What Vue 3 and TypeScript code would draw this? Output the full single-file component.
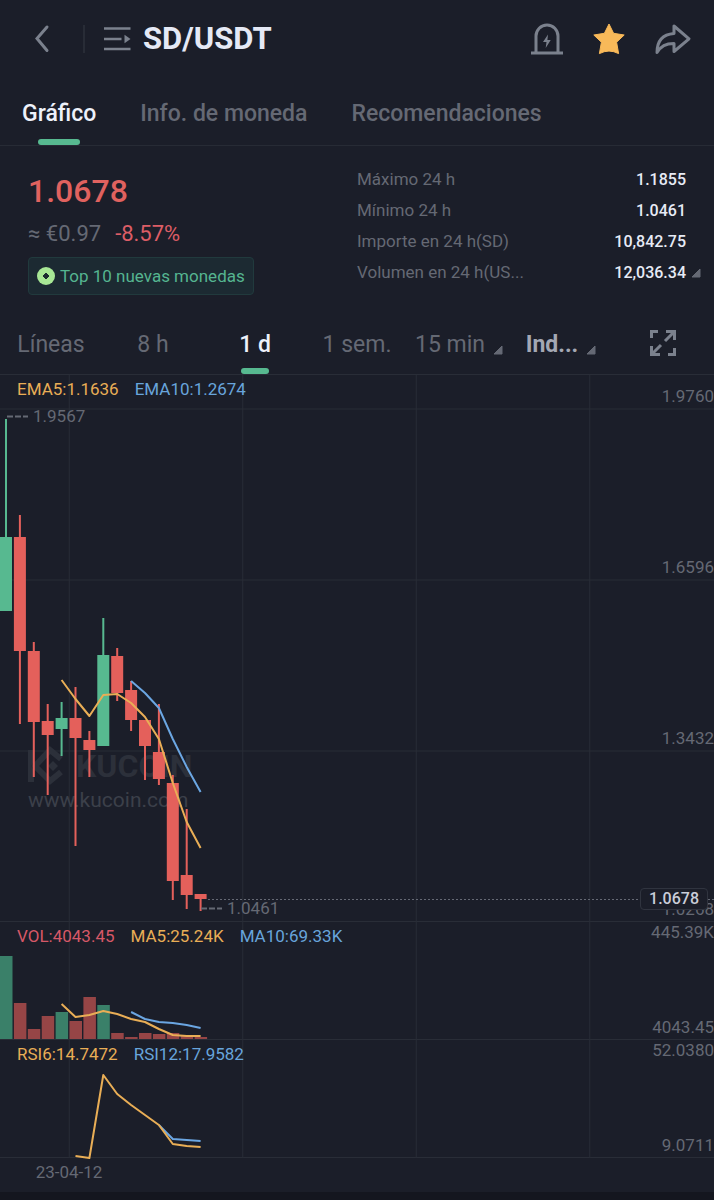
<script setup lang="ts">
import { ref } from 'vue'

type Point = [slot: number, y: number]
interface Candle {
  up: boolean
  open: number
  close: number
  high: number
  low: number
  volume: number
}

const STEP = 13.9
const slotX = (i: number): number => 6 + i * STEP
const line = (points: Point[]): string => points.map(([i, y]) => `${slotX(i)},${y}`).join(' ')

const tabs = ['Gráfico', 'Info. de moneda', 'Recomendaciones']
const activeTab = ref(tabs[0])

const frames = ['Líneas', '8 h', '1 d', '1 sem.']
const activeFrame = ref('1 d')

const stats = [
  { label: 'Máximo 24 h', value: '1.1855' },
  { label: 'Mínimo 24 h', value: '1.0461' },
  { label: 'Importe en 24 h(SD)', value: '10,842.75' },
  { label: 'Volumen en 24 h(US...', value: '12,036.34' },
]

const priceAxis = ['1.9760', '1.6596', '1.3432', '1.0268']
const gridX = ['9.7%', '34%', '58.3%', '82.6%']
const gridY = [34, 205, 376]

// Vertical values are offsets from the top of the price pane; volume is the bar height.
const candles: Candle[] = [
  { up: true, open: 162, close: 236, high: 44, low: 236, volume: 83 },
  { up: false, open: 162, close: 276, high: 140, low: 349, volume: 36 },
  { up: false, open: 276, close: 347, high: 267, low: 402, volume: 10 },
  { up: false, open: 346, close: 360, high: 329, low: 420, volume: 23 },
  { up: true, open: 343, close: 354, high: 327, low: 381, volume: 27 },
  { up: false, open: 343, close: 363, high: 312, low: 471, volume: 18 },
  { up: false, open: 365, close: 375, high: 356, low: 402, volume: 42 },
  { up: true, open: 280, close: 371, high: 243, low: 371, volume: 34 },
  { up: false, open: 281, close: 318, high: 273, low: 326, volume: 6 },
  { up: false, open: 315, close: 345, high: 306, low: 356, volume: 2 },
  { up: false, open: 345, close: 371, high: 345, low: 405, volume: 6 },
  { up: false, open: 377, close: 404, high: 329, low: 410, volume: 5 },
  { up: false, open: 408, close: 506, high: 400, low: 525, volume: 6 },
  { up: false, open: 500, close: 520, high: 434, low: 534, volume: 4 },
  { up: false, open: 519, close: 524, high: 519, low: 536, volume: 2 },
]

const ema5 = line([[4, 305], [5, 324], [6, 341], [7, 320], [8, 319], [9, 328], [10, 342], [11, 364], [12, 408], [13, 447], [14, 473]])
const ema10 = line([[9, 306], [10, 318], [11, 333], [12, 364], [13, 392], [14, 417]])
const volMa5 = line([[4, 82], [5, 95], [6, 93], [7, 89], [8, 92], [9, 97], [10, 100], [11, 107], [12, 113], [13, 114], [14, 114]])
const volMa10 = line([[9, 90], [10, 97], [11, 100], [12, 101], [13, 103], [14, 106]])
const rsi6 = line([[5, 116], [6, 118], [7, 35], [8, 54], [9, 65], [10, 75], [11, 85], [12, 104], [13, 106], [14, 107]])
const rsi12 = line([[11, 85], [12, 99], [13, 100], [14, 101]])
</script>

<template>
  <main class="screen">
    <header class="topbar">
      <button class="icon-btn" type="button" aria-label="Volver">
        <svg width="16" height="30" viewBox="0 0 16 30"><path class="stroke" d="M13 3 3 14.500 13 26.500" stroke-linecap="round" /></svg>
      </button>
      <span class="divider"></span>
      <button class="icon-btn" type="button" aria-label="Lista de pares">
        <svg width="27" height="26" viewBox="0 0 27 26">
          <path class="stroke thin" d="M0 2.500h26.500M0 13h17.500M0 23h26.500" />
          <path class="fill" d="M20.500 8.800 26.500 13l-6 4.200z" />
        </svg>
      </button>
      <h1>SD/USDT</h1>
      <nav class="actions">
        <button class="icon-btn" type="button" aria-label="Alerta de precio">
          <svg width="32" height="32" viewBox="0 0 32 32">
            <path class="stroke" d="M5 29V13a11 11 0 0 1 22 0v16M0 30h32" />
            <path class="fill" d="m17 11.500-5 7.500h3.500l-.8 6 5-8h-3.300z" />
          </svg>
        </button>
        <button class="icon-btn" type="button" aria-label="Favorito">
          <svg width="32" height="32" viewBox="0 0 32 32">
            <path class="star" d="m16 1 4.600 9.300 10.600 1.700-7.600 7.200 2 11.400Q16 25.500 6.400 30.600l2-11.400L.8 12l10.600-1.700z" />
          </svg>
        </button>
        <button class="icon-btn" type="button" aria-label="Compartir">
          <svg width="36" height="32" viewBox="0 0 36 32">
            <path class="stroke" stroke-linejoin="round" d="M19 3v7.500C7 11.500 2 18 2 29.500 6 23 10.500 20.500 19 20.500v8L34 15.800z" />
          </svg>
        </button>
      </nav>
    </header>

    <nav class="tabs">
      <button v-for="t in tabs" :key="t" type="button" :class="{ active: t === activeTab }" @click="activeTab = t">{{ t }}</button>
    </nav>

    <section class="summary">
      <div class="quote">
        <p class="price">1.0678</p>
        <p class="change"><span>≈ €0.97</span><span class="down">-8.57%</span></p>
        <a class="badge" href="#top">
          <svg width="18" height="18" viewBox="0 0 18 18">
            <circle cx="9" cy="9" r="9" fill="#a7e795" />
            <path d="m9 6 3 3-3 3-3-3z" fill="#1a2b30" stroke="#1a2b30" stroke-linejoin="round" />
          </svg>
          Top 10 nuevas monedas
        </a>
      </div>
      <div class="stats">
        <dl>
          <div v-for="s in stats" :key="s.label">
            <dt>{{ s.label }}</dt>
            <dd>{{ s.value }}</dd>
          </div>
        </dl>
        <button class="icon-btn more" type="button" aria-label="Más datos">
          <svg width="10" height="10" viewBox="0 0 10 10"><path class="caret" d="M9 1v8H1z" /></svg>
        </button>
      </div>
    </section>

    <nav class="frames">
      <button v-for="f in frames" :key="f" type="button" :class="{ active: f === activeFrame }" @click="activeFrame = f">{{ f }}</button>
      <button class="menu" type="button" aria-haspopup="menu">
        15 min
        <svg width="10" height="10" viewBox="0 0 10 10"><path class="caret" d="M9 1v8H1z" /></svg>
      </button>
      <button class="menu strong" type="button" aria-haspopup="menu">
        Ind...
        <svg width="10" height="10" viewBox="0 0 10 10"><path class="caret" d="M9 1v8H1z" /></svg>
      </button>
      <button class="expand" type="button" aria-label="Pantalla completa">
        <svg width="26" height="26" viewBox="0 0 26 26">
          <path class="stroke" d="M1.500 8V1.500H8M18 24.500h6.500V18M16 1.500h8.500V10M24 2l-9 9M1.500 16v8.500H10M2 24l9-9" />
        </svg>
      </button>
    </nav>

    <section class="chart">
      <div class="pane price-pane">
        <svg class="plot" width="100%" height="547">
          <line v-for="x in gridX" :key="x" class="grid" :x1="x" :x2="x" y1="0" y2="547" />
          <line v-for="y in gridY" :key="y" class="grid" x1="0" x2="100%" :y1="y" :y2="y" />
          <g class="mark">
            <path d="M28 375h6v12l-3 4 3 4v12h-6z" />
            <path class="mark-ring" d="M61 384 50 375 35 391 50 406 61 397" />
            <path d="m53 386 5 5-5 5-5-5z" />
            <text x="76" y="402" class="mark-name">KUCOIN</text>
            <text x="28" y="432" class="mark-url">www.kucoin.com</text>
          </g>
          <g v-for="(c, i) in candles" :key="i" :class="c.up ? 'up' : 'dn'">
            <rect :x="slotX(i) - 1" :y="c.high" width="2" :height="c.low - c.high" />
            <rect :x="slotX(i) - 6" :y="c.open" width="12" :height="c.close - c.open" />
          </g>
          <polyline class="series gold" :points="ema5" />
          <polyline class="series blue" :points="ema10" />
          <line class="last" x1="208" x2="100%" y1="524.500" y2="524.500" />
          <path class="leader" d="M7 41.500h21M201 533.500h21" />
          <text x="33" y="47">1.9567</text>
          <text x="227" y="539">1.0461</text>
        </svg>
        <p class="legend"><span class="gold">EMA5:1.1636</span><span class="blue">EMA10:1.2674</span></p>
        <div class="axis">
          <span v-for="p in priceAxis" :key="p">{{ p }}</span>
        </div>
        <output class="tag">1.0678</output>
      </div>

      <div class="pane">
        <svg class="plot" width="100%" height="118">
          <line v-for="x in gridX" :key="x" class="grid" :x1="x" :x2="x" y1="0" y2="118" />
          <rect v-for="(c, i) in candles" :key="i" :class="c.up ? 'vol-up' : 'vol-dn'" :x="slotX(i) - 6" :y="117 - c.volume" width="12.500" :height="c.volume" />
          <polyline class="series gold" :points="volMa5" />
          <polyline class="series blue" :points="volMa10" />
        </svg>
        <p class="legend"><span class="red">VOL:4043.45</span><span class="gold">MA5:25.24K</span><span class="blue">MA10:69.33K</span></p>
        <div class="axis ends"><span>445.39K</span><span>4043.45</span></div>
      </div>

      <div class="pane">
        <svg class="plot" width="100%" height="118">
          <line v-for="x in gridX" :key="x" class="grid" :x1="x" :x2="x" y1="0" y2="118" />
          <polyline class="series blue" :points="rsi12" />
          <polyline class="series gold" :points="rsi6" />
        </svg>
        <p class="legend"><span class="gold">RSI6:14.7472</span><span class="blue">RSI12:17.9582</span></p>
        <div class="axis ends"><span>52.0380</span><span>9.0711</span></div>
      </div>

      <p class="date"><time datetime="2023-04-12">23-04-12</time></p>
    </section>
    <footer class="strip"></footer>
  </main>
</template>

<style>
body {
  margin: 0;
  background: #1b1e29;
}
</style>

<style scoped>
.screen {
  display: flex;
  flex-direction: column;
  min-height: 100vh;
  background: #1b1e29;
  color: #656974;
  font-family: Roboto, 'Liberation Sans', sans-serif;
  font-size: 17px;
  line-height: 20px;
}
p, h1, dl, dd { margin: 0; }
svg { display: block; flex: none; overflow: visible; }
button {
  padding: 0;
  border: 0;
  background: none;
  color: inherit;
  font: inherit;
  cursor: pointer;
}
.icon-btn { display: flex; }
.stroke { fill: none; stroke: #7b818d; stroke-width: 3; }
.thin { stroke-width: 2.600; }
.fill { fill: #7b818d; }
.star { fill: #f8b959; stroke: #f8b959; stroke-linejoin: round; }
.caret { fill: #656974; stroke: #656974; stroke-linejoin: round; }

.topbar {
  display: flex;
  align-items: center;
  height: 78px;
  padding: 0 23px 0 34px;
}
.divider { width: 2px; height: 28px; margin: 0 19px 0 33px; background: #282c36; }
h1 {
  margin-left: 12px;
  color: #e5e9f5;
  font-size: 31px;
  font-weight: 700;
  line-height: 40px;
}
.actions { display: flex; gap: 30px; margin-left: auto; }

.tabs {
  display: flex;
  gap: 44px;
  height: 67px;
  padding-left: 22px;
  border-bottom: 1px solid #272b35;
  font-size: 23px;
  font-weight: 500;
}
.tabs button, .frames button { position: relative; padding-top: 4px; }
.active { color: #eef1fa; }
.active::after {
  content: '';
  position: absolute;
  bottom: 0;
  left: 50%;
  width: 42px;
  height: 6px;
  border-radius: 3px;
  background: #57b990;
  transform: translateX(-50%);
}

.summary {
  display: grid;
  grid-template-columns: 1fr 1fr;
  padding: 18px 0 17px;
}
.quote { padding-left: 28px; }
.price { color: #e0625f; font-size: 32px; font-weight: 500; line-height: 54px; }
.change { display: flex; gap: 14px; font-size: 22px; line-height: 32px; }
.down { color: #dc5d66; }
.badge {
  display: inline-flex;
  align-items: center;
  gap: 5px;
  margin-top: 7px;
  padding: 8px;
  border: 1px solid #213a3d;
  border-radius: 4px;
  background: #1c2a32;
  color: #55b590;
  text-decoration: none;
}
.stats { display: flex; align-items: flex-start; gap: 5px; padding-right: 13px; }
dl { flex: 1; }
dl div { display: flex; justify-content: space-between; line-height: 31px; }
dd { color: #e7ebf6; font-size: 16px; font-weight: 500; }
.more { margin-top: 104px; }

.frames {
  display: grid;
  grid-template-columns: repeat(7, 1fr);
  height: 62px;
  border-bottom: 1px solid #292d37;
  font-size: 23px;
}
.frames button { display: flex; align-items: center; justify-content: center; }
.frames .expand { padding-top: 0; }
.frames .active { font-weight: 500; }
.frames .active::after { width: 28px; }
.frames .menu { gap: 8px; }
.menu svg { margin-top: 10px; }
.strong { color: #a4a8b4; font-weight: 700; }

.pane { display: grid; position: relative; border-bottom: 1px solid #292d37; height: 117px; }
.price-pane { height: 546px; }
.pane > * { grid-area: 1 / 1; }
.plot { min-width: 0; }
.plot text { fill: #656974; }
.grid { stroke: #292d37; }
.series { fill: none; stroke-width: 2; stroke-linejoin: round; }
.series.gold { stroke: #e9ae56; }
.series.blue { stroke: #6ba6e2; }
.up { fill: #57b990; }
.dn { fill: #e4605b; }
.vol-up { fill: #3a8069; }
.vol-dn { fill: #964546; }
.last { stroke: #656974; stroke-dasharray: 2 2; }
.leader { stroke: #656974; stroke-width: 2; stroke-dasharray: 6 2; }
.mark path, .plot .mark text { fill: #2c303a; }
.mark .mark-ring { fill: none; stroke: #2c303a; stroke-width: 6; }
.mark-name { font-size: 32px; font-weight: 700; }
.plot .mark .mark-url { fill: #3c404a; font-size: 21px; }
.legend { display: flex; gap: 16px; padding: 4px 0 0 17px; }
span.gold { color: #e9ae56; }
span.blue { color: #68a5dc; }
span.red { color: #d65867; }
.axis {
  display: grid;
  grid-template-rows: 34px repeat(3, 171px);
  align-items: end;
  text-align: right;
  line-height: 26px;
}
.axis.ends { grid-template-rows: 1fr 1fr; line-height: 20px; }
.ends span:first-child { align-self: start; }
.ends span:last-child { padding-bottom: 3px; }
.tag {
  position: absolute;
  right: 6px;
  bottom: 11px;
  padding: 0 8px;
  border: 1px solid #30343f;
  border-radius: 4px;
  background: #1b1e29;
  color: #c9cdd9;
  font-size: 16px;
  font-weight: 500;
}
.date { width: 138px; padding: 4px 0 10px; text-align: center; }
.strip { flex: 1; min-height: 8px; background: #14161f; }
</style>
